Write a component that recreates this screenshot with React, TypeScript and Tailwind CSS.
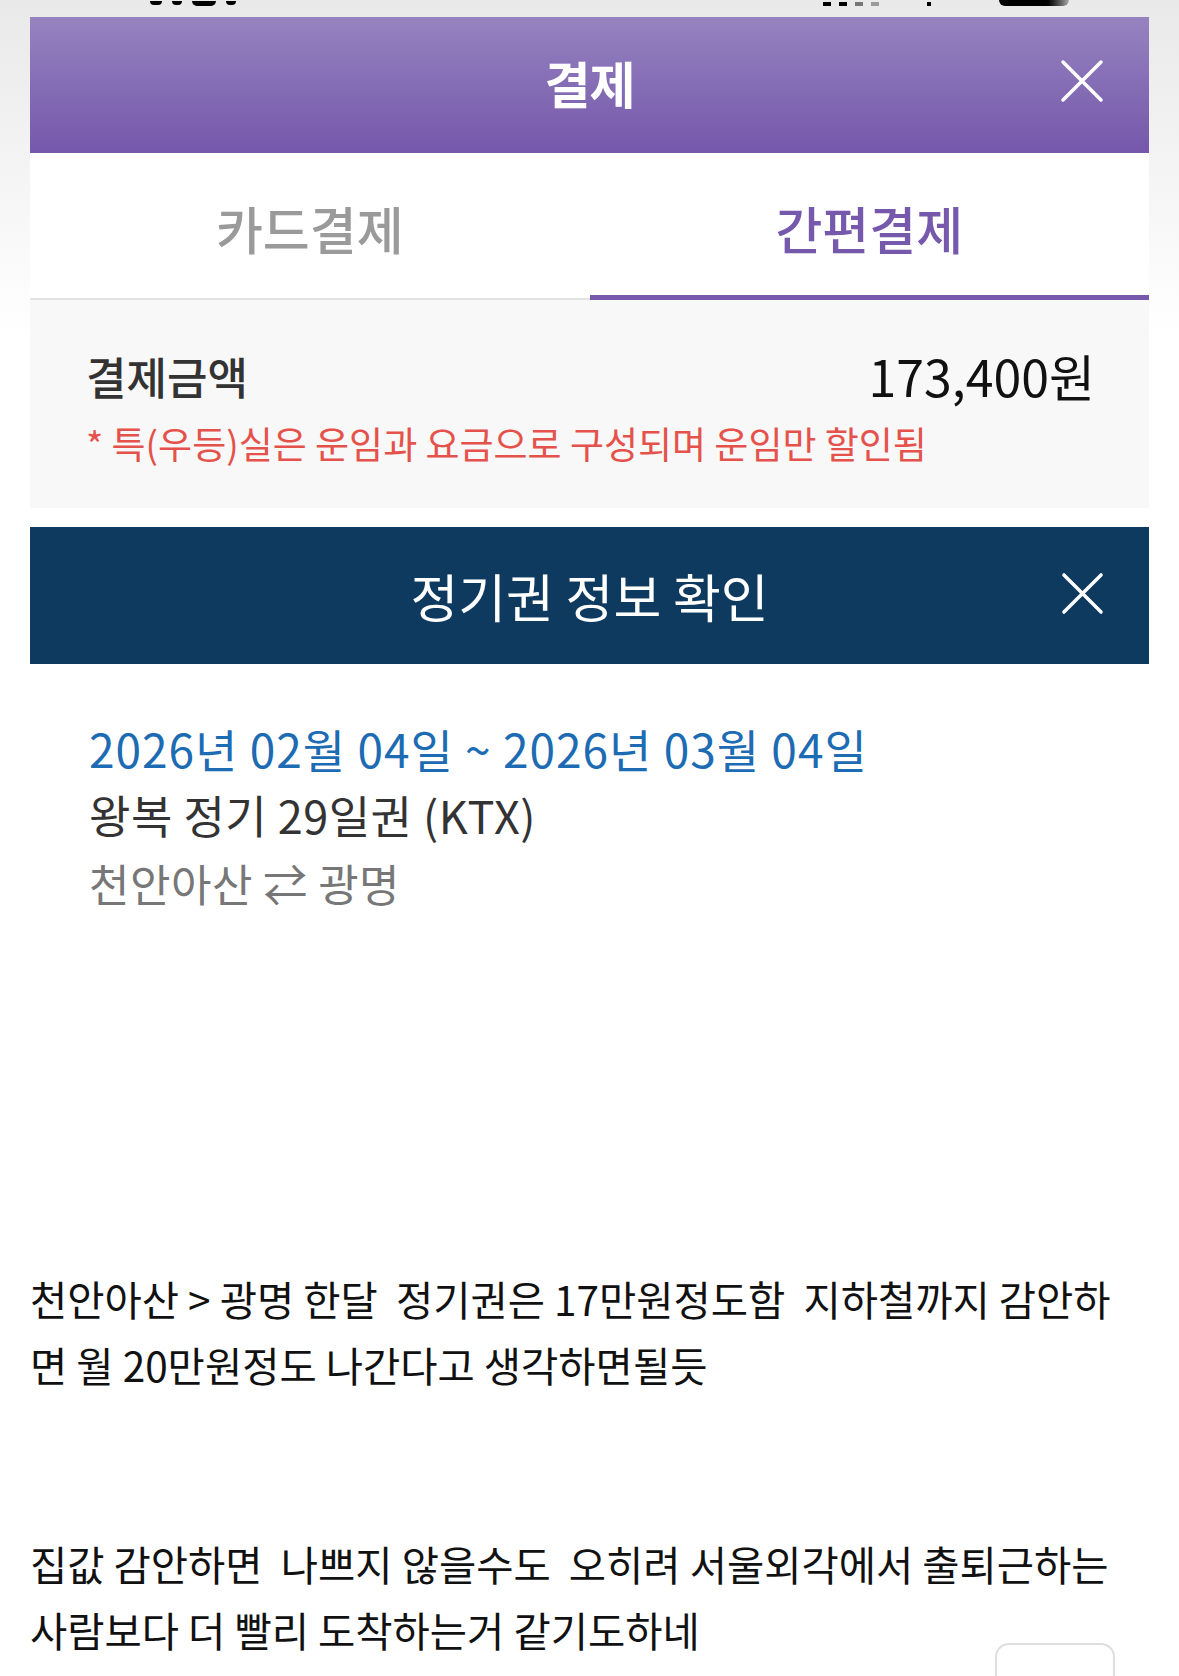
const font = { fontFamily: '"Noto Sans CJK KR", "Noto Sans", sans-serif' };

function CloseIcon({ className }: { className?: string }) {
  return (
    <svg viewBox="0 0 44 44" className={className} fill="none" stroke="currentColor" strokeWidth={3.5} strokeLinecap="round">
      <path d="M3 3 L41 41 M41 3 L3 41" />
    </svg>
  );
}

const postLines = [
  ['천안아산 > 광명 한달  정기권은 17만원정도함  지하철까지 감안하', '면 월 20만원정도 나간다고 생각하면될듯'],
  ['집값 감안하면  나쁘지 않을수도  오히려 서울외각에서 출퇴근하는', '사람보다 더 빨리 도착하는거 같기도하네'],
];

export default function App() {
  return (
    <div
      className="relative w-[1179px] h-[1676px] overflow-hidden bg-gradient-to-b from-[#e9e9e9] via-white via-[20%] to-white"
      style={font}
    >
      {/* status bar remnant */}
      <div className="h-[17px] flex items-end justify-between px-[150px] pb-[11px]">
        <div className="flex gap-[10px]">
          <span className="w-[12px] h-[4px] rounded-b-full bg-black" />
          <span className="w-[10px] h-[4px] rounded-b-full bg-black" />
          <span className="w-[24px] h-[5px] rounded-b-full bg-black" />
          <span className="w-[10px] h-[4px] rounded-b-full bg-black" />
        </div>
        <div className="flex items-end gap-[8px] mr-[-40px]">
          <span className="w-[8px] h-[4px] bg-black" />
          <span className="w-[8px] h-[4px] bg-black" />
          <span className="w-[8px] h-[4px] bg-[#777]" />
          <span className="w-[8px] h-[4px] bg-[#999] mr-[40px]" />
          <span className="w-[4px] h-[4px] bg-black mr-[60px]" />
          <span className="w-[70px] h-[6px] rounded-b-[10px] bg-gradient-to-r from-black via-black via-[65%] to-[#aaa]" />
        </div>
      </div>

      <div className="mx-[30px] bg-white">
        {/* purple header */}
        <div className="relative h-[136px] flex items-center justify-center pb-[6px] bg-gradient-to-b from-[#9683bf] to-[#7557ab]">
          <span className="text-[50px] font-bold text-white leading-none tracking-[-1px]">결제</span>
          <CloseIcon className="absolute right-[45px] top-[42px] w-[44px] h-[44px] text-white" />
        </div>

        {/* tabs */}
        <div className="flex h-[147px]">
          <div className="flex-1 flex items-center justify-center border-b-2 border-[#e2e2e2] pt-[6px]">
            <span className="text-[51px] font-medium text-[#9a9a9a]">카드결제</span>
          </div>
          <div className="flex-1 flex items-center justify-center border-b-[5px] border-[#7658ac] pt-[9px]">
            <span className="text-[51px] font-medium text-[#7658ac]">간편결제</span>
          </div>
        </div>

        {/* amount */}
        <div className="h-[208px] bg-[#f8f8f8] px-[56px] pt-[38px]">
          <div className="flex items-center justify-between">
            <span className="text-[44px] font-medium text-[#333]">결제금액</span>
            <span className="text-[50px] text-[#111] mr-[-2px]">173,400원</span>
          </div>
          <div className="mt-[3px] text-[37px] text-[#e5524b]">* 특(우등)실은 운임과 요금으로 구성되며 운임만 할인됨</div>
        </div>

        {/* navy header */}
        <div className="relative mt-[19px] h-[137px] flex items-center justify-center bg-[#0f3a5f]">
          <span className="text-[52px] text-white leading-none">정기권 정보 확인</span>
          <CloseIcon className="absolute right-[45px] top-[45px] w-[43px] h-[43px] text-white" />
        </div>

        {/* ticket info */}
        <div className="pl-[59px] pt-[52px] flex flex-col">
          <span className="text-[46px] leading-[64px] text-[#1c6bb3] tracking-[1px]">2026년 02월 04일 ~ 2026년 03월 04일</span>
          <span className="text-[45px] leading-[70px] text-[#333] tracking-[0.5px]">왕복 정기 29일권 (KTX)</span>
          <span className="text-[44px] leading-[66px] text-[#777] tracking-[0.5px]">천안아산 ⇄ 광명</span>
        </div>
      </div>

      {/* post body */}
      <div className="px-[30px] mt-[350px] flex flex-col gap-[133px] text-[40.5px] text-[#111]">
        {postLines.map((para) => (
          <div key={para[0]} className="flex flex-col">
            {para.map((line) => (
              <span key={line} className="whitespace-pre leading-[66px]">{line}</span>
            ))}
          </div>
        ))}
      </div>

      {/* floating button */}
      <div className="absolute left-[995px] top-[1643px] w-[120px] h-[80px] rounded-[14px] border-2 border-[#dedede] bg-white" />
    </div>
  );
}
